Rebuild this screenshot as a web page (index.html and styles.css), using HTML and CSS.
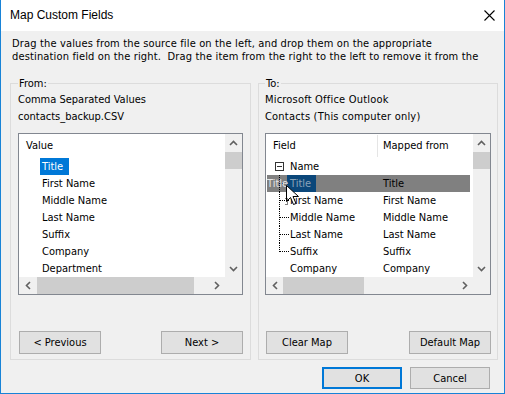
FILE: index.html
```html
<!DOCTYPE html>
<html lang="en">
<head>
    <meta charset="UTF-8">
    <title>Map Custom Fields</title>
    <link rel="stylesheet" href="styles.css">
</head>
<body>
    <div class="window">
        <div class="titlebar">
            <span class="title">Map Custom Fields</span>
            <svg class="close" width="11" height="11" viewBox="0 0 11 11"><path d="M0.5 0.5L10.5 10.5M10.5 0.5L0.5 10.5" stroke="#000" stroke-width="1.1" fill="none"/></svg>
        </div>
        <div class="dialog">
            <p class="intro">Drag the values from the source file on the left, and drop them on the appropriate<br>destination field on the right.&nbsp; Drag the item from the right to the left to remove it from the</p>

            <div class="groups">
                <fieldset class="group group-from">
                    <legend>From:</legend>
                    <div class="source">Comma Separated Values</div>
                    <div class="source">contacts_backup.CSV</div>
                    <div class="listbox">
                        <div class="view">
                            <div class="head">Value</div>
                            <div class="item"><span class="sel">Title</span></div>
                            <div class="item"><span>First Name</span></div>
                            <div class="item"><span>Middle Name</span></div>
                            <div class="item"><span>Last Name</span></div>
                            <div class="item"><span>Suffix</span></div>
                            <div class="item"><span>Company</span></div>
                            <div class="item"><span>Department</span></div>
                        </div>
                        <div class="vscroll">
                            <div class="arrow"><svg width="9" height="6" viewBox="0 0 9 6"><path d="M1 5L4.5 1.5L8 5" stroke="#606060" stroke-width="1.6" fill="none"/></svg></div>
                            <div class="vthumb"></div>
                            <div class="vtrack"></div>
                            <div class="arrow"><svg width="9" height="6" viewBox="0 0 9 6"><path d="M1 1L4.5 4.5L8 1" stroke="#606060" stroke-width="1.6" fill="none"/></svg></div>
                        </div>
                        <div class="hscroll">
                            <div class="arrow"><svg width="6" height="9" viewBox="0 0 6 9"><path d="M5 1L1.5 4.5L5 8" stroke="#606060" stroke-width="1.6" fill="none"/></svg></div>
                            <div class="hthumb hthumb-wide"></div>
                            <div class="htrack"></div>
                            <div class="arrow"><svg width="6" height="9" viewBox="0 0 6 9"><path d="M1 1L4.5 4.5L1 8" stroke="#606060" stroke-width="1.6" fill="none"/></svg></div>
                        </div>
                        <div class="corner"></div>
                    </div>
                    <div class="group-btns">
                        <button>&lt; Previous</button>
                        <button>Next &gt;</button>
                    </div>
                </fieldset>

                <fieldset class="group group-to">
                    <legend>To:</legend>
                    <div class="source">Microsoft Office Outlook</div>
                    <div class="source">Contacts (This computer only)</div>
                    <div class="listbox">
                        <div class="view tree">
                            <div class="head cols">
                                <div class="col1">Field</div>
                                <div class="col2">Mapped from</div>
                            </div>
                            <div class="row">
                                <div class="col1"><span class="expander"></span>Name</div>
                            </div>
                            <div class="row dragging">
                                <div class="col1"><span class="twig"></span><span class="drag-sel">Title</span></div>
                                <div class="col2">Title</div>
                                <span class="ghost">Title</span>
                            </div>
                            <div class="row">
                                <div class="col1"><span class="twig"></span>First Name</div>
                                <div class="col2">First Name</div>
                            </div>
                            <div class="row">
                                <div class="col1"><span class="twig"></span>Middle Name</div>
                                <div class="col2">Middle Name</div>
                            </div>
                            <div class="row">
                                <div class="col1"><span class="twig"></span>Last Name</div>
                                <div class="col2">Last Name</div>
                            </div>
                            <div class="row">
                                <div class="col1"><span class="twig twig-last"></span>Suffix</div>
                                <div class="col2">Suffix</div>
                            </div>
                            <div class="row">
                                <div class="col1 plain">Company</div>
                                <div class="col2">Company</div>
                            </div>
                            <svg class="cursor" width="16" height="24" viewBox="0 0 16 24">
                                <path d="M1.5 1.5V17.5L5.5 13.5L8.5 20.5L11 19.5L8 12.5H13.5Z" fill="#fff" stroke="#000" stroke-width="1"/>
                                <rect x="-4.5" y="14.5" width="7" height="6" fill="none" stroke="#000" stroke-width="1" stroke-dasharray="1 1"/>
                            </svg>
                        </div>
                        <div class="vscroll">
                            <div class="arrow"><svg width="9" height="6" viewBox="0 0 9 6"><path d="M1 5L4.5 1.5L8 5" stroke="#606060" stroke-width="1.6" fill="none"/></svg></div>
                            <div class="vthumb"></div>
                            <div class="vtrack"></div>
                            <div class="arrow"><svg width="9" height="6" viewBox="0 0 9 6"><path d="M1 1L4.5 4.5L8 1" stroke="#606060" stroke-width="1.6" fill="none"/></svg></div>
                        </div>
                        <div class="hscroll">
                            <div class="arrow"><svg width="6" height="9" viewBox="0 0 6 9"><path d="M5 1L1.5 4.5L5 8" stroke="#606060" stroke-width="1.6" fill="none"/></svg></div>
                            <div class="hthumb hthumb-narrow"></div>
                            <div class="htrack"></div>
                            <div class="arrow"><svg width="6" height="9" viewBox="0 0 6 9"><path d="M1 1L4.5 4.5L1 8" stroke="#606060" stroke-width="1.6" fill="none"/></svg></div>
                        </div>
                        <div class="corner"></div>
                    </div>
                    <div class="group-btns">
                        <button>Clear Map</button>
                        <button>Default Map</button>
                    </div>
                </fieldset>
            </div>

            <div class="dialog-btns">
                <button class="default">OK</button>
                <button>Cancel</button>
            </div>
        </div>
    </div>
</body>
</html>
```

FILE: styles.css
```css
body {
    margin: 0;
    font-family: "DejaVu Sans Condensed", "DejaVu Sans", sans-serif;
    font-stretch: condensed;
    font-size: 11px;
    color: #000;
    background: #fff;
}
.window {
    width: 505px;
    height: 394px;
    box-sizing: border-box;
    border: 1px solid #1883d7;
    border-top: none;
    display: flex;
    flex-direction: column;
}
.titlebar {
    height: 31px;
    flex: none;
    background: #fff;
    display: flex;
    align-items: center;
    justify-content: space-between;
    padding: 0 9px;
}
.title {
    font-family: "Liberation Sans", Arial, sans-serif;
    font-stretch: normal;
    font-size: 12px;
    margin-top: -1px;
}
.close {
    display: block;
    margin-top: -1px;
}
.dialog {
    flex: 1;
    background: #f0f0f0;
    padding: 6px 6px 0 9px;
    display: flex;
    flex-direction: column;
}
.intro {
    margin: 0 0 0 2px;
    line-height: 13px;
    height: 40px;
    letter-spacing: 0.15px;
    white-space: nowrap;
    overflow: hidden;
}
.groups {
    display: grid;
    grid-template-columns: 241px 240px;
    gap: 7px;
}
.group {
    margin: 0;
    border: 1px solid #dcdcdc;
    padding: 0 7px 5px 7px;
    min-width: 0;
}
.group-to {
    padding: 0 6px 5px 6px;
}
.group legend {
    padding: 0 1px;
    line-height: 13px;
}
.source {
    line-height: 17px;
}
.source:first-of-type {
    margin-top: 1px;
}
.group-to .source {
    letter-spacing: 0.2px;
}
/* list boxes */
.listbox {
    margin-top: 8px;
    height: 162px;
    box-sizing: border-box;
    border: 1px solid #828790;
    background: #fff;
    display: grid;
    grid-template-columns: 1fr 17px;
    grid-template-rows: 1fr 17px;
    overflow: hidden;
}
.view {
    position: relative;
    overflow: hidden;
    line-height: 17px;
}
.head {
    height: 24px;
    line-height: 24px;
    padding-left: 7px;
}
.item {
    height: 17px;
    padding-left: 21px;
}
.item span {
    display: inline-block;
    padding: 0 2px;
}
.item .sel {
    background: #0078d7;
    color: #fff;
    padding-right: 6px;
}
.vscroll {
    background: #f0f0f0;
    display: flex;
    flex-direction: column;
}
.hscroll {
    background: #f0f0f0;
    display: flex;
}
.corner {
    background: #f0f0f0;
}
.arrow {
    width: 17px;
    height: 17px;
    flex: none;
    display: flex;
    align-items: center;
    justify-content: center;
}
.arrow svg {
    display: block;
}
.vthumb {
    height: 17px;
    margin-top: 1px;
    background: #cdcdcd;
}
.vtrack,
.htrack {
    flex: 1;
}
.hthumb {
    background: #cdcdcd;
}
.hthumb-wide {
    width: 157px;
    margin-left: 1px;
}
.hthumb-narrow {
    width: 81px;
}
/* tree list */
.cols {
    display: flex;
    padding-left: 0;
}
.col1 {
    width: 111px;
    flex: none;
    display: flex;
    align-items: stretch;
    white-space: nowrap;
}
.head .col1 {
    padding-left: 7px;
    box-sizing: border-box;
}
.head .col2 {
    border-left: 1px solid #e5e5e5;
    padding-left: 5px;
    margin: 1px 0 1px 0;
    line-height: 22px;
}
.row {
    height: 17px;
    display: flex;
    position: relative;
}
.row .col2 {
    padding-left: 6px;
    white-space: nowrap;
}
.expander {
    width: 9px;
    height: 9px;
    box-sizing: border-box;
    border: 1px solid #333;
    margin: 4px 6px 0 9px;
    background: linear-gradient(#333, #333) center / 5px 1px no-repeat, #fff;
}
.twig {
    width: 11px;
    flex: none;
    margin-left: 13px;
    border-left: 1px dotted #000;
    box-sizing: border-box;
    background: repeating-linear-gradient(to right, #000 0 1px, transparent 1px 2px) 0 8px / 100% 1px no-repeat;
}
.twig-last {
    align-self: flex-start;
    height: 9px;
}
.plain {
    padding-left: 24px;
    box-sizing: border-box;
}
.dragging {
    background: #808080;
    margin: 0 3px 0 1px;
}
.dragging .col1 {
    width: 110px;
}
.dragging .twig {
    margin-left: 12px;
}
.drag-sel {
    background: #0b477a;
    color: #8aa2b8;
    padding: 0 5px 0 3px;
    margin-left: -3px;
}
.ghost {
    position: absolute;
    left: 0;
    top: 0;
    color: #e6e6e6;
}
.cursor {
    position: absolute;
    top: 50px;
    left: 19px;
}
/* buttons */
button {
    font-family: inherit;
    font-stretch: inherit;
    font-size: 11px;
    color: #000;
    background: #e1e1e1;
    border: 1px solid #adadad;
    padding: 0;
    border-radius: 0;
}
.group-btns {
    margin-top: 36px;
    padding-left: 1px;
    display: flex;
    justify-content: space-between;
}
.group-btns button {
    width: 82px;
    height: 23px;
}
.dialog-btns {
    margin-top: 7px;
    margin-right: 8px;
    display: flex;
    justify-content: flex-end;
    gap: 8px;
}
.dialog-btns button {
    width: 80px;
    height: 22px;
}
.dialog-btns .default {
    border: 2px solid #0078d7;
}
```
